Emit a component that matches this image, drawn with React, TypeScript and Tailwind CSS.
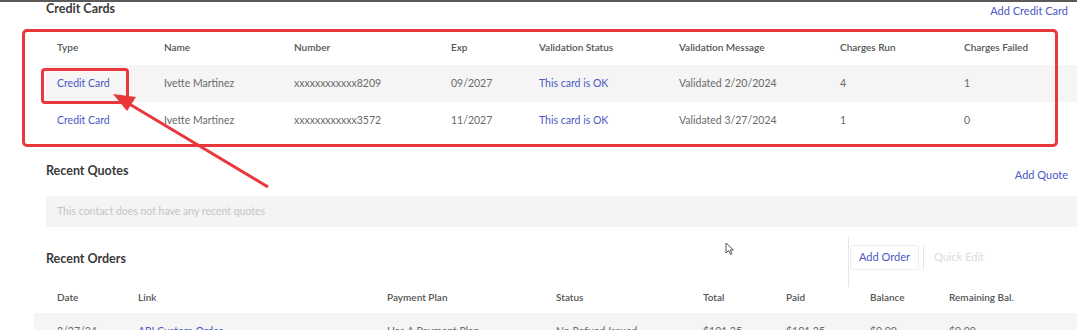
import React from "react";

const ccCols = ["w-[107px]", "w-[130px]", "w-[157px]", "w-[88px]", "w-[140px]", "w-[161px]", "w-[124px]", "flex-1"];
const ordCols = ["w-[81px]", "w-[249px]", "w-[169px]", "w-[147px]", "w-[83px]", "w-[84px]", "w-[79px]", "flex-1"];

const ccHead = ["Type", "Name", "Number", "Exp", "Validation Status", "Validation Message", "Charges Run", "Charges Failed"];
const ccRows = [
  ["Credit Card", "Ivette Martinez", "xxxxxxxxxxxx8209", "09/2027", "This card is OK", "Validated 2/20/2024", "4", "1"],
  ["Credit Card", "Ivette Martinez", "xxxxxxxxxxxx3572", "11/2027", "This card is OK", "Validated 3/27/2024", "1", "0"],
];
const ordHead = ["Date", "Link", "Payment Plan", "Status", "Total", "Paid", "Balance", "Remaining Bal."];
const ordRow = ["3/27/24", "API Custom Order", "Has A Payment Plan", "No Refund Issued", "$101.25", "$101.25", "$0.00", "$0.00"];

const blue = "text-[#4a58c4]";

export default function App() {
  return (
    <div
      className="relative w-[1077px] h-[330px] overflow-hidden bg-white border-t-2 border-[#5a5a5a]"
      style={{ fontFamily: "Lato, 'Open Sans', sans-serif" }}
    >
      <div className="pl-[46px] pr-[9px]">
        {/* Credit Cards header */}
        <div className="flex justify-between items-start h-[27px]">
          <div className="text-[12.5px] font-bold text-[#3a3a3a] leading-[16px] mt-[-1px]">Credit Cards</div>
          <div className={`text-[11px] ${blue} leading-[16px] mt-[1px]`}>Add Credit Card</div>
        </div>
        {/* credit table */}
        <div className="mr-[-9px]">
          <div className="flex h-[36px] items-center pl-[11px] text-[10px] font-semibold text-[#555]">
            {ccHead.map((h, i) => (
              <div key={i} className={ccCols[i]}>{h}</div>
            ))}
          </div>
          {ccRows.map((r, ri) => (
            <div
              key={ri}
              className={`flex h-[37px] items-center pl-[11px] text-[10.5px] text-[#6a6a6a] ${ri === 0 ? "bg-[#f4f5f4]" : "bg-white"}`}
            >
              {r.map((c, i) => (
                <div key={i} className={`${ccCols[i]} ${i === 0 || i === 4 ? blue : ""}`}>{c}</div>
              ))}
            </div>
          ))}
        </div>

        {/* Recent Quotes */}
        <div className="flex justify-between items-start mt-[24px] h-[33px]">
          <div className="text-[12.5px] font-bold text-[#3a3a3a] leading-[16px]">Recent Quotes</div>
          <div className={`text-[11px] ${blue} leading-[16px] mt-[4px]`}>Add Quote</div>
        </div>
        <div className="mr-[-9px] h-[31px] bg-[#f3f4f3] flex items-center pl-[11px] text-[10.5px] text-[#c4c6c4]">
          This contact does not have any recent quotes
        </div>

        {/* Recent Orders */}
        <div className="flex items-start mt-[10px] h-[44px]">
          <div className="text-[12.5px] font-bold text-[#3a3a3a] leading-[16px] mt-[14px]">Recent Orders</div>
          <div className="ml-auto mr-[84px] flex items-start">
            <div className="w-px h-[50px] bg-[#e6e6e6]" />
            <div className={`mt-[8px] ml-[1px] px-[8px] h-[25px] flex items-center border border-[#eeeeee] rounded-[2px] text-[11px] ${blue}`}>
              Add Order
            </div>
            <div className="mt-[8px] ml-[4px] w-px h-[25px] bg-[#e6e6e6]" />
            <div className="mt-[8px] ml-[10px] h-[25px] flex items-center text-[11px] text-[#dcdcdc]">Quick Edit</div>
          </div>
        </div>
        <div className="mr-[-9px]">
          <div className="flex h-[32px] items-center pl-[11px] text-[10px] font-semibold text-[#555]">
            {ordHead.map((h, i) => (
              <div key={i} className={ordCols[i]}>{h}</div>
            ))}
          </div>
          <div className="flex h-[37px] items-center text-[10.5px] text-[#6a6a6a] bg-[#f4f5f4] -ml-[12px] pl-[23px]">
            {ordRow.map((c, i) => (
              <div key={i} className={`${ordCols[i]} ${i === 1 ? blue : ""}`}>{c}</div>
            ))}
          </div>
        </div>
      </div>

      {/* annotation overlays */}
      <div className="absolute left-[22px] top-[27px] w-[1036px] h-[118px] border-[3px] border-[#e8383b] rounded-[5px]" />
      <div className="absolute left-[41px] top-[66px] w-[88px] h-[36px] border-[3px] border-[#e8383b] rounded-[4px]" />
      <svg className="absolute left-0 top-0" width="1077" height="330" viewBox="0 0 1077 330">
        <line x1="268" y1="185" x2="126" y2="100" stroke="#e8383b" strokeWidth="3" />
        <polygon points="113,92 136,95 127,109" fill="#e8383b" />
      </svg>
      {/* mouse cursor */}
      <svg className="absolute left-[725px] top-[240px]" width="10" height="14" viewBox="0 0 10 14">
        <path d="M1 1 L1 11 L3.5 8.5 L5.5 12.5 L7 11.8 L5 8 L8.5 8 Z" fill="#fff" stroke="#555" strokeWidth="1" />
      </svg>
    </div>
  );
}
